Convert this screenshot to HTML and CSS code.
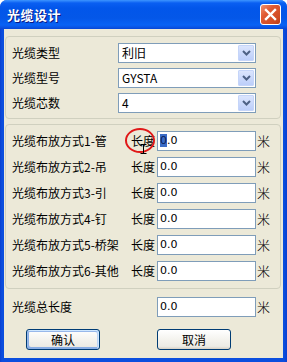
FILE: index.html
```html
<!DOCTYPE html>
<html lang="zh-CN">
<head>
    <meta charset="UTF-8">
    <title>光缆设计</title>
    <link rel="stylesheet" href="styles.css">
</head>
<body>
    <div class="window">
        <div class="titlebar">
            <span class="title">光缆设计</span>
            <span class="close">
                <svg width="13" height="13" viewBox="0 0 13 13"><path d="M2 2 L11 11 M11 2 L2 11" stroke="#fff" stroke-width="2.4" stroke-linecap="square"/></svg>
            </span>
        </div>
        <div class="client">
            <div class="group group-top">
                <div class="row">
                    <span class="label">光缆类型</span>
                    <div class="combo"><span class="value">利旧</span><span class="arrow"><svg width="9" height="6" viewBox="0 0 9 6"><path d="M1 1 L4.5 4.5 L8 1" fill="none" stroke="#4d6185" stroke-width="2"/></svg></span></div>
                </div>
                <div class="row">
                    <span class="label">光缆型号</span>
                    <div class="combo"><span class="value">GYSTA</span><span class="arrow"><svg width="9" height="6" viewBox="0 0 9 6"><path d="M1 1 L4.5 4.5 L8 1" fill="none" stroke="#4d6185" stroke-width="2"/></svg></span></div>
                </div>
                <div class="row">
                    <span class="label">光缆芯数</span>
                    <div class="combo"><span class="value">4</span><span class="arrow"><svg width="9" height="6" viewBox="0 0 9 6"><path d="M1 1 L4.5 4.5 L8 1" fill="none" stroke="#4d6185" stroke-width="2"/></svg></span></div>
                </div>
            </div>

            <div class="group group-lay">
                <div class="row">
                    <span class="label">光缆布放方式1-管</span>
                    <span class="len">长度</span>
                    <div class="field"><span class="sel">0</span>.0</div>
                    <span class="unit">米</span>
                    <span class="mark"></span>
                    <svg class="ibeam" width="7" height="10" viewBox="0 0 7 10"><path d="M0.5 0.5 H6.5 M3.5 0.5 V9.5 M0.5 9.5 H6.5" fill="none" stroke="#000" stroke-width="1"/></svg>
                </div>
                <div class="row">
                    <span class="label">光缆布放方式2-吊</span>
                    <span class="len">长度</span>
                    <div class="field">0.0</div>
                    <span class="unit">米</span>
                </div>
                <div class="row">
                    <span class="label">光缆布放方式3-引</span>
                    <span class="len">长度</span>
                    <div class="field">0.0</div>
                    <span class="unit">米</span>
                </div>
                <div class="row">
                    <span class="label">光缆布放方式4-钉</span>
                    <span class="len">长度</span>
                    <div class="field">0.0</div>
                    <span class="unit">米</span>
                </div>
                <div class="row">
                    <span class="label">光缆布放方式5-桥架</span>
                    <span class="len">长度</span>
                    <div class="field">0.0</div>
                    <span class="unit">米</span>
                </div>
                <div class="row">
                    <span class="label">光缆布放方式6-其他</span>
                    <span class="len">长度</span>
                    <div class="field">0.0</div>
                    <span class="unit">米</span>
                </div>
            </div>

            <div class="row total">
                <span class="label">光缆总长度</span>
                <div class="field">0.0</div>
                <span class="unit">米</span>
            </div>

            <div class="buttons">
                <span class="btn btn-default">确认</span>
                <span class="btn">取消</span>
            </div>
        </div>
    </div>
</body>
</html>
```

FILE: styles.css
```css
* {
    margin: 0;
    padding: 0;
    box-sizing: border-box;
}
body {
    width: 287px;
    height: 362px;
    font-family: "Noto Sans CJK SC", sans-serif;
    font-size: 12px;
    color: #000;
    background: #fff;
}
.window {
    width: 287px;
    height: 362px;
    display: flex;
    flex-direction: column;
    background: linear-gradient(to right, #0a3fd0, #0b4ede 2px, #0b4ede 284px, #0a3fd0);
    border-radius: 7px 7px 0 0;
    overflow: hidden;
}
.titlebar {
    height: 29px;
    flex: none;
    display: flex;
    align-items: center;
    justify-content: space-between;
    padding: 0 6px 0 7px;
    background: linear-gradient(to bottom, #3d95ff 0, #0a5ff2 3px, #0256ea 8px, #0457e8 18px, #0862f5 25px, #0a56e6 27px, #0646d6 29px);
}
.title {
    color: #fff;
    font-weight: bold;
    font-size: 13px;
    line-height: 16px;
    letter-spacing: 0.5px;
    text-shadow: 1px 1px #0a1883;
}
.close {
    width: 21px;
    height: 21px;
    display: flex;
    align-items: center;
    justify-content: center;
    border: 1px solid #fff;
    border-radius: 3px;
    background: linear-gradient(135deg, #f1926f 0, #e05a33 35%, #cf4a22 80%, #b63a17);
}
.client {
    flex: 1;
    margin: 0 4px 4px 4px;
    background: #ece9d8;
    display: flex;
    flex-direction: column;
}

.group {
    width: 276px;
    margin-left: 1px;
    border: 1px solid #d0d0bf;
    border-radius: 4px;
    display: flex;
    flex-direction: column;
    padding-left: 6px;
}
.group-top {
    margin-top: 7px;
    padding-top: 6px;
    padding-bottom: 5px;
    gap: 5px;
}
.group-lay {
    margin-top: 5px;
    padding-top: 6px;
    padding-bottom: 7px;
    gap: 6px;
}

.row {
    height: 20px;
    display: flex;
    align-items: center;
    position: relative;
}
.label {
    line-height: 14px;
    white-space: nowrap;
}
.group-top .label {
    width: 106px;
}
.group-lay .label {
    width: 118px;
}
.len {
    width: 27px;
    line-height: 14px;
    padding-left: 1px;
}

.combo {
    width: 138px;
    height: 20px;
    border: 1px solid #7f9db9;
    background: #fff;
    display: flex;
    align-items: center;
    justify-content: space-between;
    padding: 1px 1px 1px 3px;
}
.combo .value {
    line-height: 14px;
}
.arrow {
    width: 16px;
    height: 16px;
    display: flex;
    align-items: center;
    justify-content: center;
    border: 1px solid #c5d5f9;
    border-radius: 1px;
    background: linear-gradient(to bottom, #dbe5fd, #bccefa);
}

.field {
    width: 99px;
    height: 20px;
    border: 1px solid #7f9db9;
    background: #fff;
    padding-left: 2px;
    line-height: 18px;
    font-family: "DejaVu Sans", "Noto Sans CJK SC", sans-serif;
    font-size: 11px;
}
.sel {
    background: #3a6bc6;
    color: #0a1c55;
}
.unit {
    margin-left: 1px;
    line-height: 14px;
    font-size: 13px;
    font-weight: 300;
}
.mark {
    position: absolute;
    left: 113px;
    top: -3px;
    width: 30px;
    height: 25px;
    border: 2px solid #e01818;
    border-radius: 50%;
}
.ibeam {
    position: absolute;
    left: 128px;
    top: 13px;
}

.total {
    margin-top: 8px;
    padding-left: 8px;
}
.total .label {
    width: 145px;
}

.buttons {
    margin-top: 12px;
    display: flex;
    gap: 57px;
    padding-left: 22px;
}
.btn {
    width: 74px;
    height: 21px;
    display: flex;
    align-items: center;
    justify-content: center;
    line-height: 14px;
    border: 1px solid #003c74;
    border-radius: 3px;
    background: linear-gradient(to bottom, #fff, #f4f3ee 50%, #ecebe5 86%, #d8d0c4);
}
.btn-default {
    box-shadow: inset -1px 1px #cee7ff, inset 1px 2px #98b8ea, inset -2px 2px #bcd4f6, inset 1px -1px #89ade4, inset 2px -2px #89ade4;
}
```
